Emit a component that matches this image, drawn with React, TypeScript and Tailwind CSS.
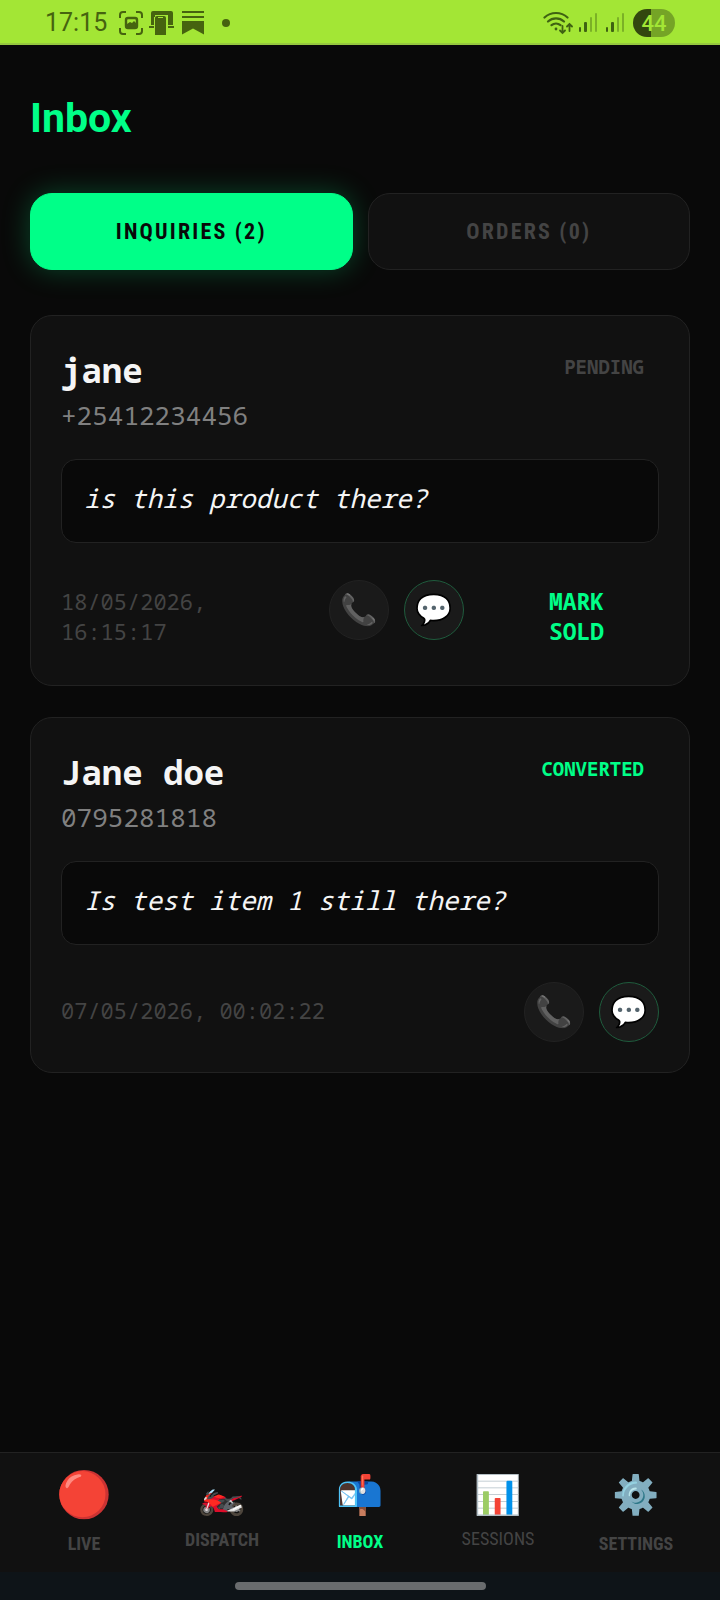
import { useState } from 'react';
import clsx from 'clsx';

const INQUIRIES = [
  {
    name: 'jane',
    phone: '+25412234456',
    message: 'is this product there?',
    date: '18/05/2026, 16:15:17',
    status: 'PENDING',
  },
  {
    name: 'Jane doe',
    phone: '0795281818',
    message: 'Is test item 1 still there?',
    date: '07/05/2026, 00:02:22',
    status: 'CONVERTED',
  },
];

const NAV_ITEMS = [
  { label: 'LIVE', icon: '🔴', iconClass: 'text-[45px] leading-[54px]', labelClass: 'font-bold text-[#444]' },
  { label: 'DISPATCH', icon: '🏍️', iconClass: 'text-[38px] leading-[46px]', labelClass: 'font-bold text-[#444]' },
  { label: 'INBOX', icon: '📬', iconClass: 'text-[38px] leading-[50px]', labelClass: 'font-bold text-[#00ff88]' },
  { label: 'SESSIONS', icon: '📊', iconClass: 'text-[38px] leading-[44px]', labelClass: 'font-normal text-[#444]' },
  { label: 'SETTINGS', icon: '⚙️', iconClass: 'text-[38px] leading-[54px]', labelClass: 'font-bold text-[#444]' },
];

const Signal = () => (
  <svg width="18" height="20" viewBox="0 0 18 20" fill="#3f6212">
    <rect x="0" y="14" width="2" height="5" rx="1" />
    <rect x="5" y="9" width="3" height="10" rx="1" />
    <rect x="11" y="4" width="2" height="15" rx="1" opacity="0.4" />
    <rect x="16" y="0" width="2" height="19" rx="1" opacity="0.4" />
  </svg>
);

const StatusBar = () => (
  <header className="flex h-[45px] shrink-0 items-center justify-between border-b-2 border-[#96c83f] bg-[#a3e635] px-[45px] pt-[3px] text-[#46630f]">
    <div className="flex items-center">
      <span className="w-[62px] text-[25px] leading-8">17:15</span>

      {/* Screenshot */}
      <svg className="ml-3" width="24" height="24" viewBox="0 0 24 24" fill="none" stroke="#46630f" strokeWidth="2">
        <path d="M1 7V4a3 3 0 0 1 3-3h3M17 1h3a3 3 0 0 1 3 3v3M23 17v3a3 3 0 0 1-3 3h-3M7 23H4a3 3 0 0 1-3-3v-3" />
        <rect x="7" y="7" width="11" height="10" rx="2" strokeWidth="2.4" />
        <path d="M8 16v-3l3-2 2 1 2-2 2 2v4z" fill="#46630f" stroke="none" />
      </svg>

      {/* Device */}
      <svg className="ml-[6px]" width="26" height="24" viewBox="0 0 26 24" fill="#46630f">
        <path d="M2 2a2 2 0 0 1 2-2h18a2 2 0 0 1 2 2v12h-5V4H6v2H5v8H2z" />
        <rect x="0" y="15" width="5" height="2" />
        <rect x="19" y="15" width="6" height="2" />
        <path d="M6 7a2 2 0 0 1 2-2h7a2 2 0 0 1 2 2v17H6z" />
        <path d="M9 6h5v1H9z" fill="#a3e635" />
      </svg>

      {/* Bookmark */}
      <svg className="ml-[7px]" width="22" height="24" viewBox="0 0 22 24" fill="#46630f">
        <path d="M0 0h22v2H0zM0 5h22v2H0zM0 10h22v13.500L11 17.500 0 23.500z" />
      </svg>
      <span className="ml-[18px] size-2 rounded-full bg-[#46630f]" />
    </div>

    <div className="flex items-center">
      {/* Wi-Fi */}
      <svg width="30" height="24" viewBox="0 0 30 24" fill="none" stroke="#3f6212" strokeWidth="2.200" strokeLinecap="round">
        <path d="M1.500 6.500a17 17 0 0 1 23 0M5 10.500a12 12 0 0 1 16 0M8.500 14.200a7 7 0 0 1 9 0" />
        <circle cx="13" cy="18" r="1.400" fill="#3f6212" stroke="none" />
        <path d="M19.500 15v7m-2.500-2.500 2.500 2.500 2.500-2.500M26.500 20v-7M24 15.500l2.500-2.500 2.500 2.500" strokeWidth="1.800" />
      </svg>
      <span className="ml-[6px]"><Signal /></span>
      <span className="ml-[9px]"><Signal /></span>
      <span className="ml-[9px] flex h-7 w-[42px] items-center justify-center rounded-full bg-linear-to-r from-[#33470f] from-44% to-[#75a426] to-44% text-[22px] font-medium text-[#a3e635]">
        44
      </span>
    </div>
  </header>
);

const InquiryCard = ({ item }: { item: (typeof INQUIRIES)[number] }) => {
  const pending = item.status === 'PENDING';

  return (
    <article className="rounded-[22px] border border-[#222] bg-[#111] p-[30px] font-['Noto_Sans_Mono','DejaVu_Sans_Mono',monospace]">
      <div className="flex items-start justify-between">
        <div>
          <h2 className="pt-px text-[34px] leading-[46px] font-bold text-[#f5f5f5]">{item.name}</h2>
          <p className="text-[26px] leading-[44px] text-[#808080]">{item.phone}</p>
        </div>
        <span
          className={clsx(
            'px-[15px] py-2 text-[19px] leading-[26px] font-bold',
            pending ? 'text-[#444]' : 'text-[#00ff88]',
          )}
        >
          {item.status}
        </span>
      </div>

      <p className="mt-[22px] rounded-[15px] border border-[#222] bg-[#090909] px-[22px] pt-5 pb-[26px] text-[26px] leading-9 text-[#f5f5f5] italic">
        {item.message}
      </p>

      <div className="mt-[37px] flex items-center justify-between">
        <time className="pr-4 pb-1 text-[22px] leading-[30px] text-[#444]">{item.date}</time>
        <div className="flex shrink-0 items-start gap-[15px] font-['Noto_Color_Emoji',sans-serif]">
          <button
            aria-label={`Call ${item.name}`}
            className="flex size-[60px] items-center justify-center rounded-full border border-[#222] bg-[#1a1a1a] text-[30px] leading-none"
          >
            📞
          </button>
          <button
            aria-label={`Message ${item.name}`}
            className="flex size-[60px] items-center justify-center rounded-full border border-[#1f5c3d] bg-[#1a1a1a] text-[30px] leading-none"
          >
            💬
          </button>
          {pending && (
            <button className="ml-[15px] w-[165px] px-10 pt-[6px] pb-[9px] font-['Noto_Sans_Mono','DejaVu_Sans_Mono',monospace] text-[23px] leading-[30px] font-bold text-[#00ff88]">
              MARK SOLD
            </button>
          )}
        </div>
      </div>
    </article>
  );
};

export default function App() {
  const [tab, setTab] = useState('inquiries');

  const tabs = [
    { id: 'inquiries', label: `INQUIRIES (${INQUIRIES.length})` },
    { id: 'orders', label: 'ORDERS (0)' },
  ];

  return (
    <div className="flex min-h-screen flex-col bg-[#090909] font-['Roboto',sans-serif]">
      <StatusBar />

      <main className="flex-1 px-[30px] pt-12 pb-[30px]">
        <h1 className="text-[41px] leading-[50px] font-bold text-[#00ff88]">Inbox</h1>

        <div className="mt-[50px] grid grid-cols-2 gap-[15px]">
          {tabs.map(({ id, label }) => (
            <button
              key={id}
              onClick={() => setTab(id)}
              className={clsx(
                "h-[77px] rounded-[22px] border font-['Roboto_Condensed',sans-serif] text-[22px] font-bold tracking-widest",
                tab === id
                  ? 'border-[#00ff88] bg-[#00ff88] text-[#090909] shadow-[0_0_28px_rgba(0,255,136,0.25)]'
                  : 'border-[#222] bg-[#111] text-[#444]',
              )}
            >
              {label}
            </button>
          ))}
        </div>

        {/* Inquiries */}
        <div className="mt-[45px] flex flex-col gap-[31px]">
          {tab === 'inquiries' && INQUIRIES.map((item) => <InquiryCard key={item.phone} item={item} />)}
        </div>
      </main>

      <nav className="flex h-[120px] shrink-0 items-center border-t border-[#222] bg-[#111] px-[15px] pb-[2px]">
        {NAV_ITEMS.map((item) => (
          <a key={item.label} href="#" className="flex flex-1 flex-col items-center gap-[10px]">
            <span className={clsx("font-['Noto_Color_Emoji',sans-serif]", item.iconClass)}>{item.icon}</span>
            <span className={clsx("font-['Roboto_Condensed',sans-serif] text-[18px] leading-6", item.labelClass)}>
              {item.label}
            </span>
          </a>
        ))}
      </nav>

      {/* Gesture bar */}
      <div className="flex h-7 shrink-0 items-center justify-center bg-[#0e1418]">
        <span className="h-2 w-[251px] rounded-full bg-[#696c6e]" />
      </div>
    </div>
  );
}
